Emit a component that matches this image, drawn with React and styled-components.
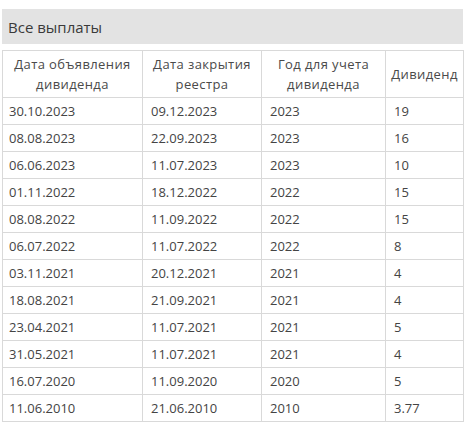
import React from 'react';
import styled, { createGlobalStyle } from 'styled-components';

const GlobalStyle = createGlobalStyle`
    body {
        margin: 0;
        background: #fff;
        font-family: "Open Sans", "Liberation Sans", sans-serif;
    }
`;

const Wrapper = styled.div`
    width: 461px;
    padding: 9px 0 0 2px;
`;

const TitleBar = styled.div`
    height: 35px;
    background: #e3e3e3;
    display: flex;
    align-items: center;
    padding-left: 6px;
    font-size: 15px;
    color: #3a3a3a;
`;

const Table = styled.table`
    margin-top: 6px;
    width: 461px;
    border-collapse: collapse;
    table-layout: fixed;
    font-size: 13px;
    color: #444;
`;

const HeadCell = styled.th`
    font-weight: 400;
    text-align: center;
    line-height: 20px;
    letter-spacing: 0.4px;
    height: 46px;
    padding: 0 2px;
    border: 1px solid #d9d9d9;
    color: #4a4a4a;
    vertical-align: middle;
`;

const Cell = styled.td`
    height: 26px;
    padding: 0 0 0 ${(p) => (p.first ? '6px' : '8px')};
    border: 1px solid #d9d9d9;
    white-space: nowrap;
`;

const rows = [
    ['30.10.2023', '09.12.2023', '2023', '19'],
    ['08.08.2023', '22.09.2023', '2023', '16'],
    ['06.06.2023', '11.07.2023', '2023', '10'],
    ['01.11.2022', '18.12.2022', '2022', '15'],
    ['08.08.2022', '11.09.2022', '2022', '15'],
    ['06.07.2022', '11.07.2022', '2022', '8'],
    ['03.11.2021', '20.12.2021', '2021', '4'],
    ['18.08.2021', '21.09.2021', '2021', '4'],
    ['23.04.2021', '11.07.2021', '2021', '5'],
    ['31.05.2021', '11.07.2021', '2021', '4'],
    ['16.07.2020', '11.09.2020', '2020', '5'],
    ['11.06.2010', '21.06.2010', '2010', '3.77'],
];

const App = () => (
    <>
        <GlobalStyle />
        <Wrapper>
            <TitleBar>Все выплаты</TitleBar>
            <Table>
                <colgroup>
                    <col style={{ width: 140 }} />
                    <col style={{ width: 119 }} />
                    <col style={{ width: 124 }} />
                    <col style={{ width: 78 }} />
                </colgroup>
                <thead>
                    <tr>
                        <HeadCell>Дата объявления<br />дивиденда</HeadCell>
                        <HeadCell>Дата закрытия<br />реестра</HeadCell>
                        <HeadCell>Год для учета<br />дивиденда</HeadCell>
                        <HeadCell>Дивиденд</HeadCell>
                    </tr>
                </thead>
                <tbody>
                    {rows.map((r) => (
                        <tr key={r[0] + r[1]}>
                            {r.map((v, i) => (
                                <Cell key={i} first={i === 0}>{v}</Cell>
                            ))}
                        </tr>
                    ))}
                </tbody>
            </Table>
        </Wrapper>
    </>
);

export default App;
